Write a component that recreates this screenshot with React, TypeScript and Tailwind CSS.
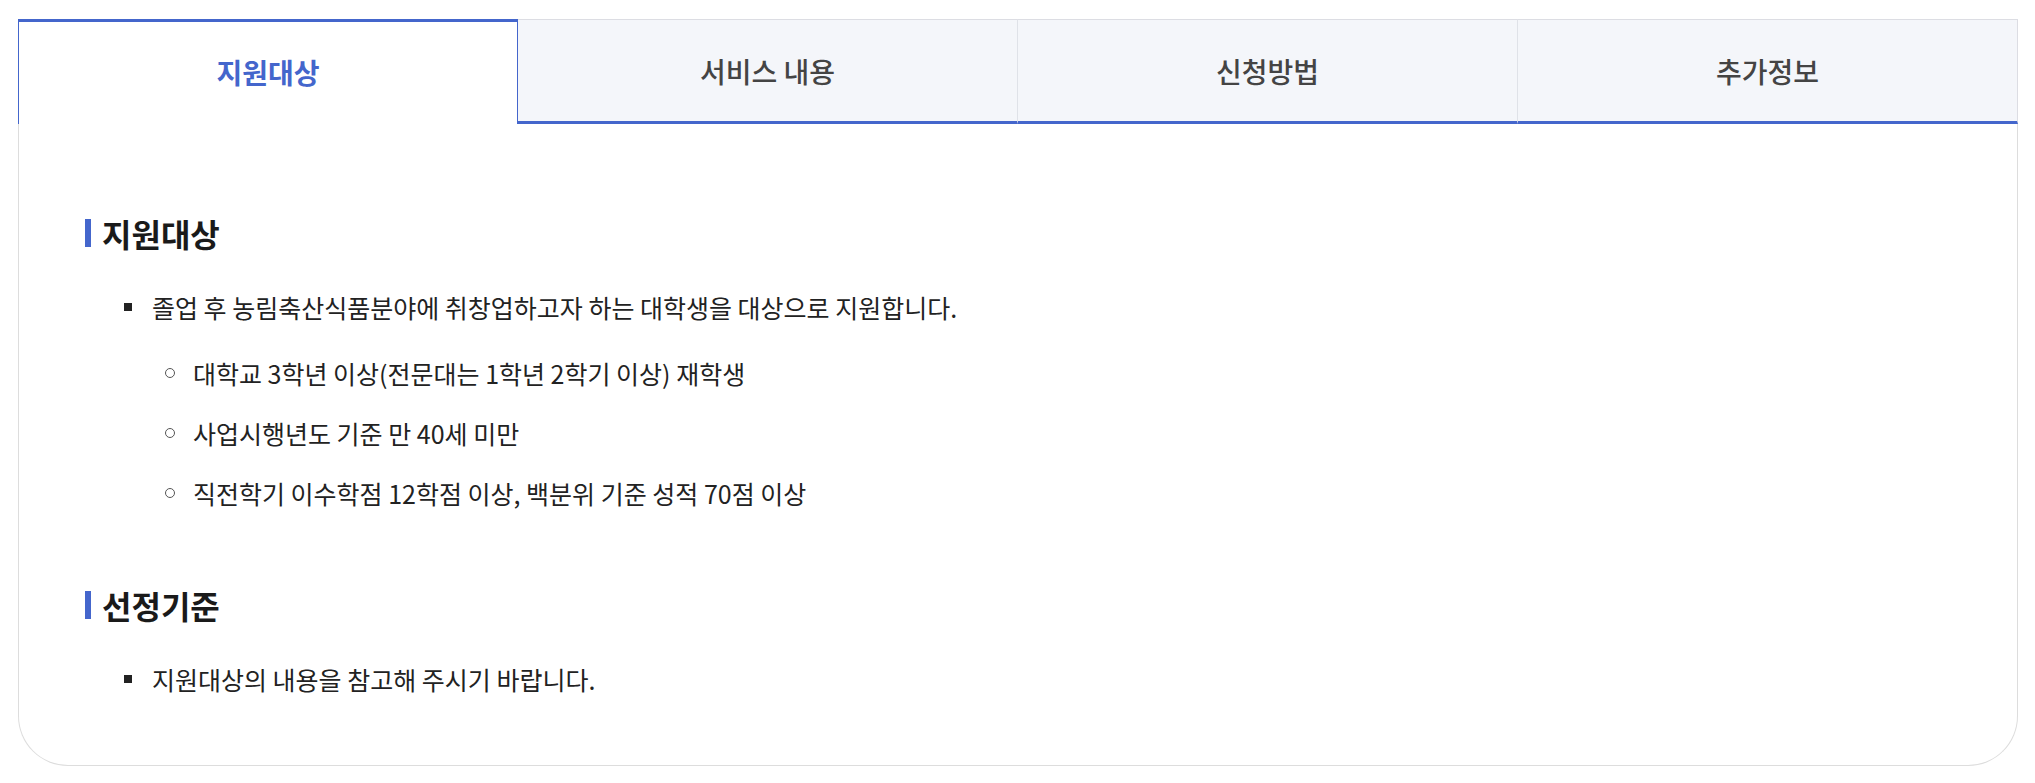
import React from "react";

function Tab({ label, active, last }: { label: string; active?: boolean; last?: boolean }) {
  if (active) {
    return (
      <div className="flex h-[105px] w-[500px] items-center justify-center border-x border-t-[3px] border-[#4466cc] bg-white pb-[3px] text-[28px] font-bold text-[#4466cc]">
        {label}
      </div>
    );
  }
  return (
    <div
      className={
        "flex h-[105px] w-[500px] items-center justify-center border-t border-b-[3px] border-t-[#dcdde3] border-b-[#4466cc] bg-[#f4f6fa] text-[28px] font-medium text-[#444] " +
        (last ? "border-r border-r-[#dcdde3]" : "border-r border-r-[#dfe2e8]")
      }
    >
      {label}
    </div>
  );
}

function Heading({ children, className = "" }: { children: React.ReactNode; className?: string }) {
  return (
    <div className={"flex items-center gap-[11px] " + className}>
      <span className="block h-[28px] w-[6px] bg-[#4466cc]" />
      <h3 className="text-[32px] font-bold leading-[42px] text-[#1a1a1a]">{children}</h3>
    </div>
  );
}

function Square({ children, className = "" }: { children: React.ReactNode; className?: string }) {
  return (
    <li className={"flex items-center " + className}>
      <span className="ml-[39px] mr-[20px] block h-[8px] w-[8px] shrink-0 bg-[#222]" />
      <span className="text-[25px] leading-[34px] text-[#222]">{children}</span>
    </li>
  );
}

function Circle({ children }: { children: React.ReactNode }) {
  return (
    <li className="flex items-center">
      <span className="ml-[80px] mr-[18px] block h-[10px] w-[10px] shrink-0 rounded-full border border-[#555]" />
      <span className="text-[25px] leading-[34px] text-[#222]">{children}</span>
    </li>
  );
}

export default function App() {
  return (
    <div className="min-h-[783px] bg-white pl-[18px] pr-[17px] pt-[19px] font-['Noto_Sans_CJK_KR','Noto_Sans',sans-serif]">
      <div className="flex">
        <Tab label="지원대상" active />
        <Tab label="서비스 내용" />
        <Tab label="신청방법" />
        <Tab label="추가정보" last />
      </div>
      <div className="rounded-b-[50px] border-x border-b border-[#dddddd] pb-[69px] pl-[66px] pt-[88px]">
        <Heading>지원대상</Heading>
        <ul className="mt-[36px]">
          <Square>졸업 후 농림축산식품분야에 취창업하고자 하는 대학생을 대상으로 지원합니다.</Square>
        </ul>
        <ul className="mt-[32px] flex flex-col gap-[26px]">
          <Circle>대학교 3학년 이상(전문대는 1학년 2학기 이상) 재학생</Circle>
          <Circle>사업시행년도 기준 만 40세 미만</Circle>
          <Circle>직전학기 이수학점 12학점 이상, 백분위 기준 성적 70점 이상</Circle>
        </ul>
        <Heading className="mt-[74px]">선정기준</Heading>
        <ul className="mt-[36px]">
          <Square>지원대상의 내용을 참고해 주시기 바랍니다.</Square>
        </ul>
      </div>
    </div>
  );
}
